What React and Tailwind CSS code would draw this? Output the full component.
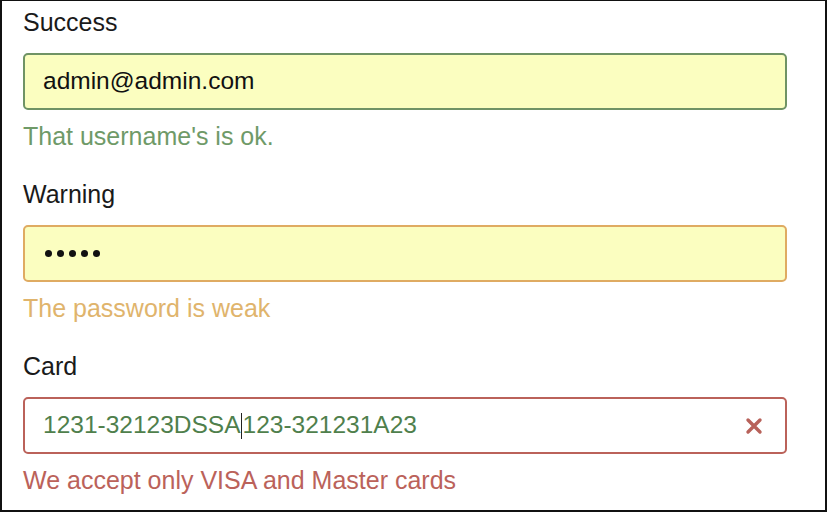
const font = { fontFamily: '"Liberation Sans", Arial, sans-serif' };

function Field({ label, border, bg, helpColor, help, children }) {
  return (
    <div className="mb-[30px]">
      <div className="text-[25px] leading-[28px] text-[#1a1a1a]">{label}</div>
      <div
        className={`mt-[17px] flex h-[57px] w-[764px] items-center rounded-[5px] border-2 pl-[18px] pr-[22px] ${border} ${bg}`}
      >
        {children}
      </div>
      <div className={`mt-[12px] text-[25px] leading-[28px] ${helpColor}`}>{help}</div>
    </div>
  );
}

export default function App() {
  return (
    <div
      style={font}
      className="box-border h-[512px] w-[827px] overflow-hidden border-x-2 border-b-2 border-t border-[#111] bg-white pl-[21px] pt-[7px]"
    >
      <Field
        label="Success"
        border="border-[#6f9365]"
        bg="bg-[#fbfec0]"
        helpColor="text-[#6f9a68]"
        help="That username's is ok."
      >
        <span className="text-[24.5px] text-[#111]">admin@admin.com</span>
      </Field>

      <Field
        label="Warning"
        border="border-[#dfab62]"
        bg="bg-[#fbfec0]"
        helpColor="text-[#e0b46c]"
        help="The password is weak"
      >
        <span className="flex gap-[5px] pl-[2px]">
          {[0, 1, 2, 3, 4].map((i) => (
            <span key={i} className="block h-[7px] w-[7px] rounded-full bg-[#111]" />
          ))}
        </span>
      </Field>

      <Field
        label="Card"
        border="border-[#bb625a]"
        bg="bg-white"
        helpColor="text-[#bb625a]"
        help="We accept only VISA and Master cards"
      >
        <span className="flex flex-1 items-center text-[24.5px] text-[#4f7f4c]">
          1231-32123DSSA
          <span className="mx-[0.5px] inline-block h-[26px] w-[1px] bg-[#222]" />
          123-321231A23
        </span>
        <svg width="18" height="18" viewBox="0 0 18 18" className="shrink-0">
          <path d="M3 3L15 15M15 3L3 15" stroke="#b8625a" strokeWidth="3.4" strokeLinecap="round" />
        </svg>
      </Field>
    </div>
  );
}
